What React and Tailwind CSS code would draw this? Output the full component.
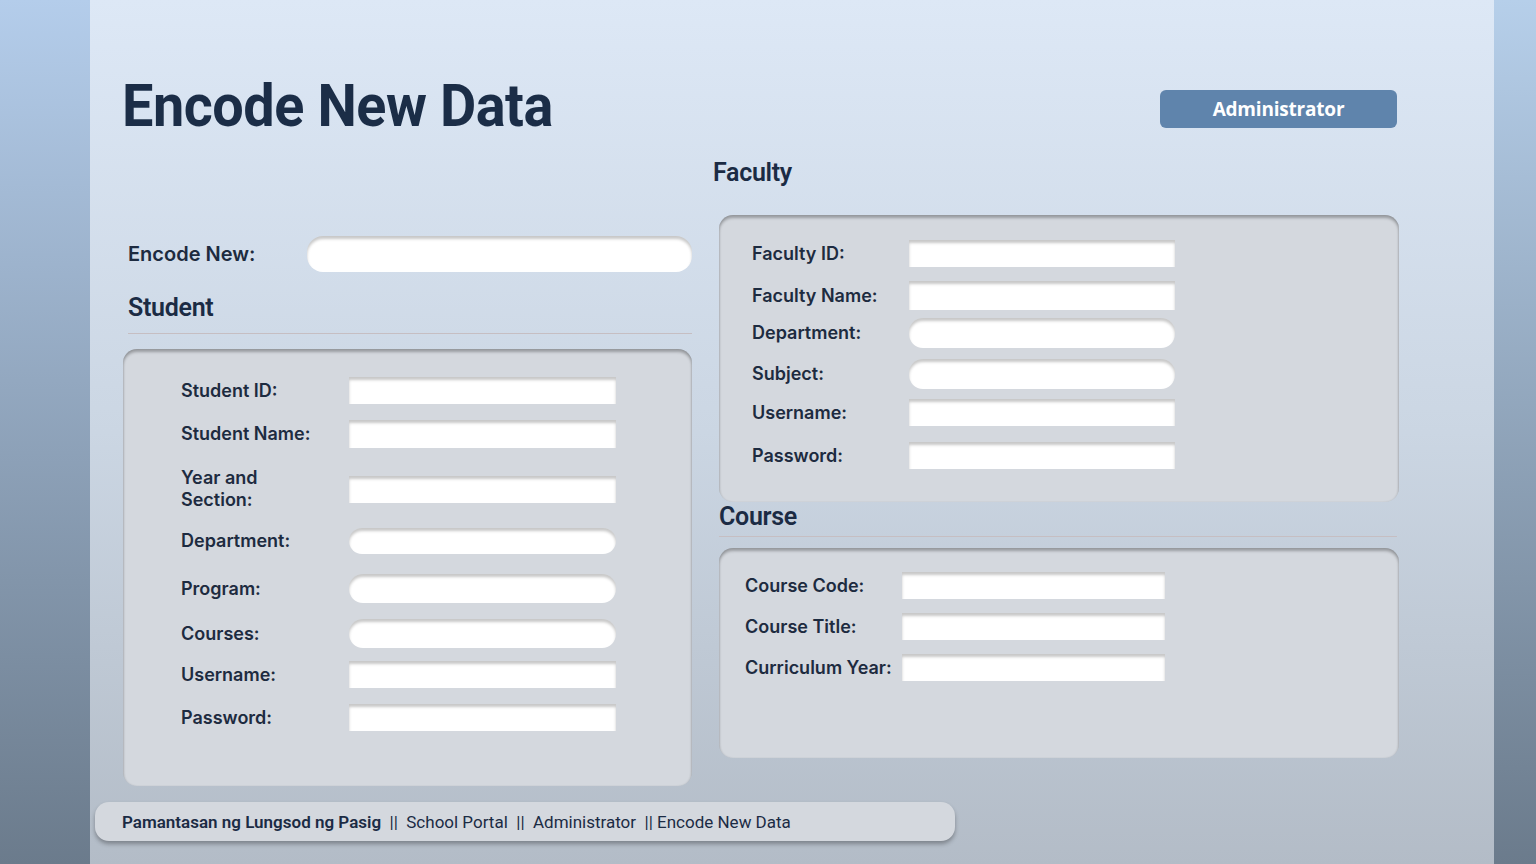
import React from "react";

const studentRows = [
  { label: "Student ID:", row: "mt-[28px] h-[27px]", input: "h-[27px]" },
  { label: "Student Name:", row: "mt-[16px] h-[28px]", input: "h-[28px]" },
  { label: "Year and Section:", row: "mt-[19px] h-[44px]", input: "h-[27px]", wrap: true },
  { label: "Department:", row: "mt-[17px] h-[26px]", input: "h-[26px]", round: true },
  { label: "Program:", row: "mt-[20px] h-[29px]", input: "h-[29px]", round: true },
  { label: "Courses:", row: "mt-[16px] h-[29px]", input: "h-[29px]", round: true },
  { label: "Username:", row: "mt-[13px] h-[27px]", input: "h-[27px]" },
  { label: "Password:", row: "mt-[16px] h-[27px]", input: "h-[27px]" },
];

const facultyRows = [
  { label: "Faculty ID:", row: "mt-[25px] h-[27px]", input: "h-[27px]" },
  { label: "Faculty Name:", row: "mt-[14px] h-[29px]", input: "h-[29px]" },
  { label: "Department:", row: "mt-[8px] h-[30px]", input: "h-[30px]", round: true },
  { label: "Subject:", row: "mt-[11px] h-[30px]", input: "h-[30px]", round: true },
  { label: "Username:", row: "mt-[10px] h-[27px]", input: "h-[27px]" },
  { label: "Password:", row: "mt-[16px] h-[27px]", input: "h-[27px]" },
];

const courseRows = [
  { label: "Course Code:", row: "mt-[24px] h-[27px]", input: "h-[27px]" },
  { label: "Course Title:", row: "mt-[14px] h-[27px]", input: "h-[27px]" },
  { label: "Curriculum Year:", row: "mt-[14px] h-[27px]", input: "h-[27px]" },
];

const labelFont = "font-['Inter',sans-serif] font-semibold tracking-[0px] text-[#1d2b40]";
const headFont = "font-['Roboto',sans-serif] font-semibold text-[25px] leading-[30px] tracking-[-0.3px] text-[#1b2b44]";
const inset = "bg-white shadow-[inset_0_3px_3px_rgba(0,0,0,0.22)]";
const card = "bg-[#d4d8de] rounded-[14px] shadow-[inset_0_3px_3px_rgba(0,0,0,0.28),inset_1px_0_2px_rgba(0,0,0,0.06),inset_-1px_0_2px_rgba(0,0,0,0.06)]";

const FormRow = ({ r, labelW, inputW }) => (
  <div className={`flex items-center ${r.row}`}>
    <div className={`${labelW} ${labelFont} text-[18px] leading-[22px] shrink-0`}>
      {r.wrap ? (
        <>
          Year and
          <br />
          Section:
        </>
      ) : (
        r.label
      )}
    </div>
    <div className={`${inputW} ${r.input} ${inset} ${r.round ? "rounded-[14px]" : ""}`} />
  </div>
);

export default function App() {
  return (
    <div className="w-full h-[864px] flex overflow-hidden">
      {/* outer strip */}
      <div className="w-[90px] h-full bg-gradient-to-b from-[#b4cdeb] to-[#6b7b8c]" />

      {/* main panel */}
      <div className="w-[1404px] h-full flex flex-col bg-gradient-to-b from-[#dde8f6] via-[#cbd6e3] to-[#b3bcc7] pl-[33px] pr-[95px]">
        {/* header */}
        <div className="flex items-start justify-between pt-[76px]">
          <h1 className="font-['Roboto',sans-serif] font-bold text-[60px] leading-[60px] tracking-[-0.5px] origin-left scale-x-[0.93] text-[#1b2d47] -ml-[1px]">
            Encode New Data
          </h1>
          <div className="mt-[14px] mr-[2px] w-[237px] h-[38px] rounded-[6px] bg-[#5f84ac] flex items-center justify-center font-['Open_Sans',sans-serif] font-bold text-[19px] text-white tracking-[-0.2px]">
            Administrator
          </div>
        </div>

        {/* columns */}
        <div className="flex gap-[27px] mt-[20px]">
          {/* left column */}
          <div className="w-[569px] flex flex-col">
            <div className="flex items-center mt-[80px] h-[36px] pl-[5px]">
              <div className={`w-[179px] ${labelFont} text-[20px]`}>Encode New:</div>
              <div className={`w-[385px] h-[36px] rounded-[16px] ${inset}`} />
            </div>
            <div className={`${headFont} mt-[21px] pl-[5px]`}>Student</div>
            <div className="mt-[10px] ml-[5px] h-px bg-[#c6bec2]" />
            <div className={`${card} mt-[15px] h-[437px] pl-[58px] flex flex-col`}>
              {studentRows.map((r) => (
                <FormRow key={r.label} r={r} labelW="w-[168px]" inputW="w-[267px]" />
              ))}
            </div>
          </div>

          {/* right column */}
          <div className="w-[680px] flex flex-col">
            <div className={`${headFont} -ml-[6px] pt-[2px] -mb-[2px]`}>Faculty</div>
            <div className={`${card} mt-[29px] h-[287px] pl-[33px] flex flex-col`}>
              {facultyRows.map((r) => (
                <FormRow key={r.label} r={r} labelW="w-[157px]" inputW="w-[266px]" />
              ))}
            </div>
            <div className={headFont}>Course</div>
            <div className="mt-[4px] mr-[2px] h-px bg-[#c6bec2]" />
            <div className={`${card} mt-[11px] h-[210px] pl-[26px] flex flex-col`}>
              {courseRows.map((r) => (
                <FormRow key={r.label} r={r} labelW="w-[157px]" inputW="w-[263px]" />
              ))}
            </div>
          </div>
        </div>

        {/* footer breadcrumb */}
        <div className="mt-[16px] -ml-[28px] w-[860px] h-[39px] rounded-[14px] bg-[#d4d8de] shadow-[0_3px_4px_rgba(0,0,0,0.3)] flex items-center pl-[27px] pt-[3px] font-['Roboto',sans-serif] text-[17px] text-[#1b2b44] whitespace-pre">
          <span className="font-semibold">Pamantasan ng Lungsod ng Pasig</span>
          <span>{"  ||  School Portal  ||  Administrator  || Encode New Data"}</span>
        </div>
      </div>

      {/* right strip */}
      <div className="flex-1 h-full bg-gradient-to-b from-[#b6cfea] to-[#6b7b8c]" />
    </div>
  );
}
